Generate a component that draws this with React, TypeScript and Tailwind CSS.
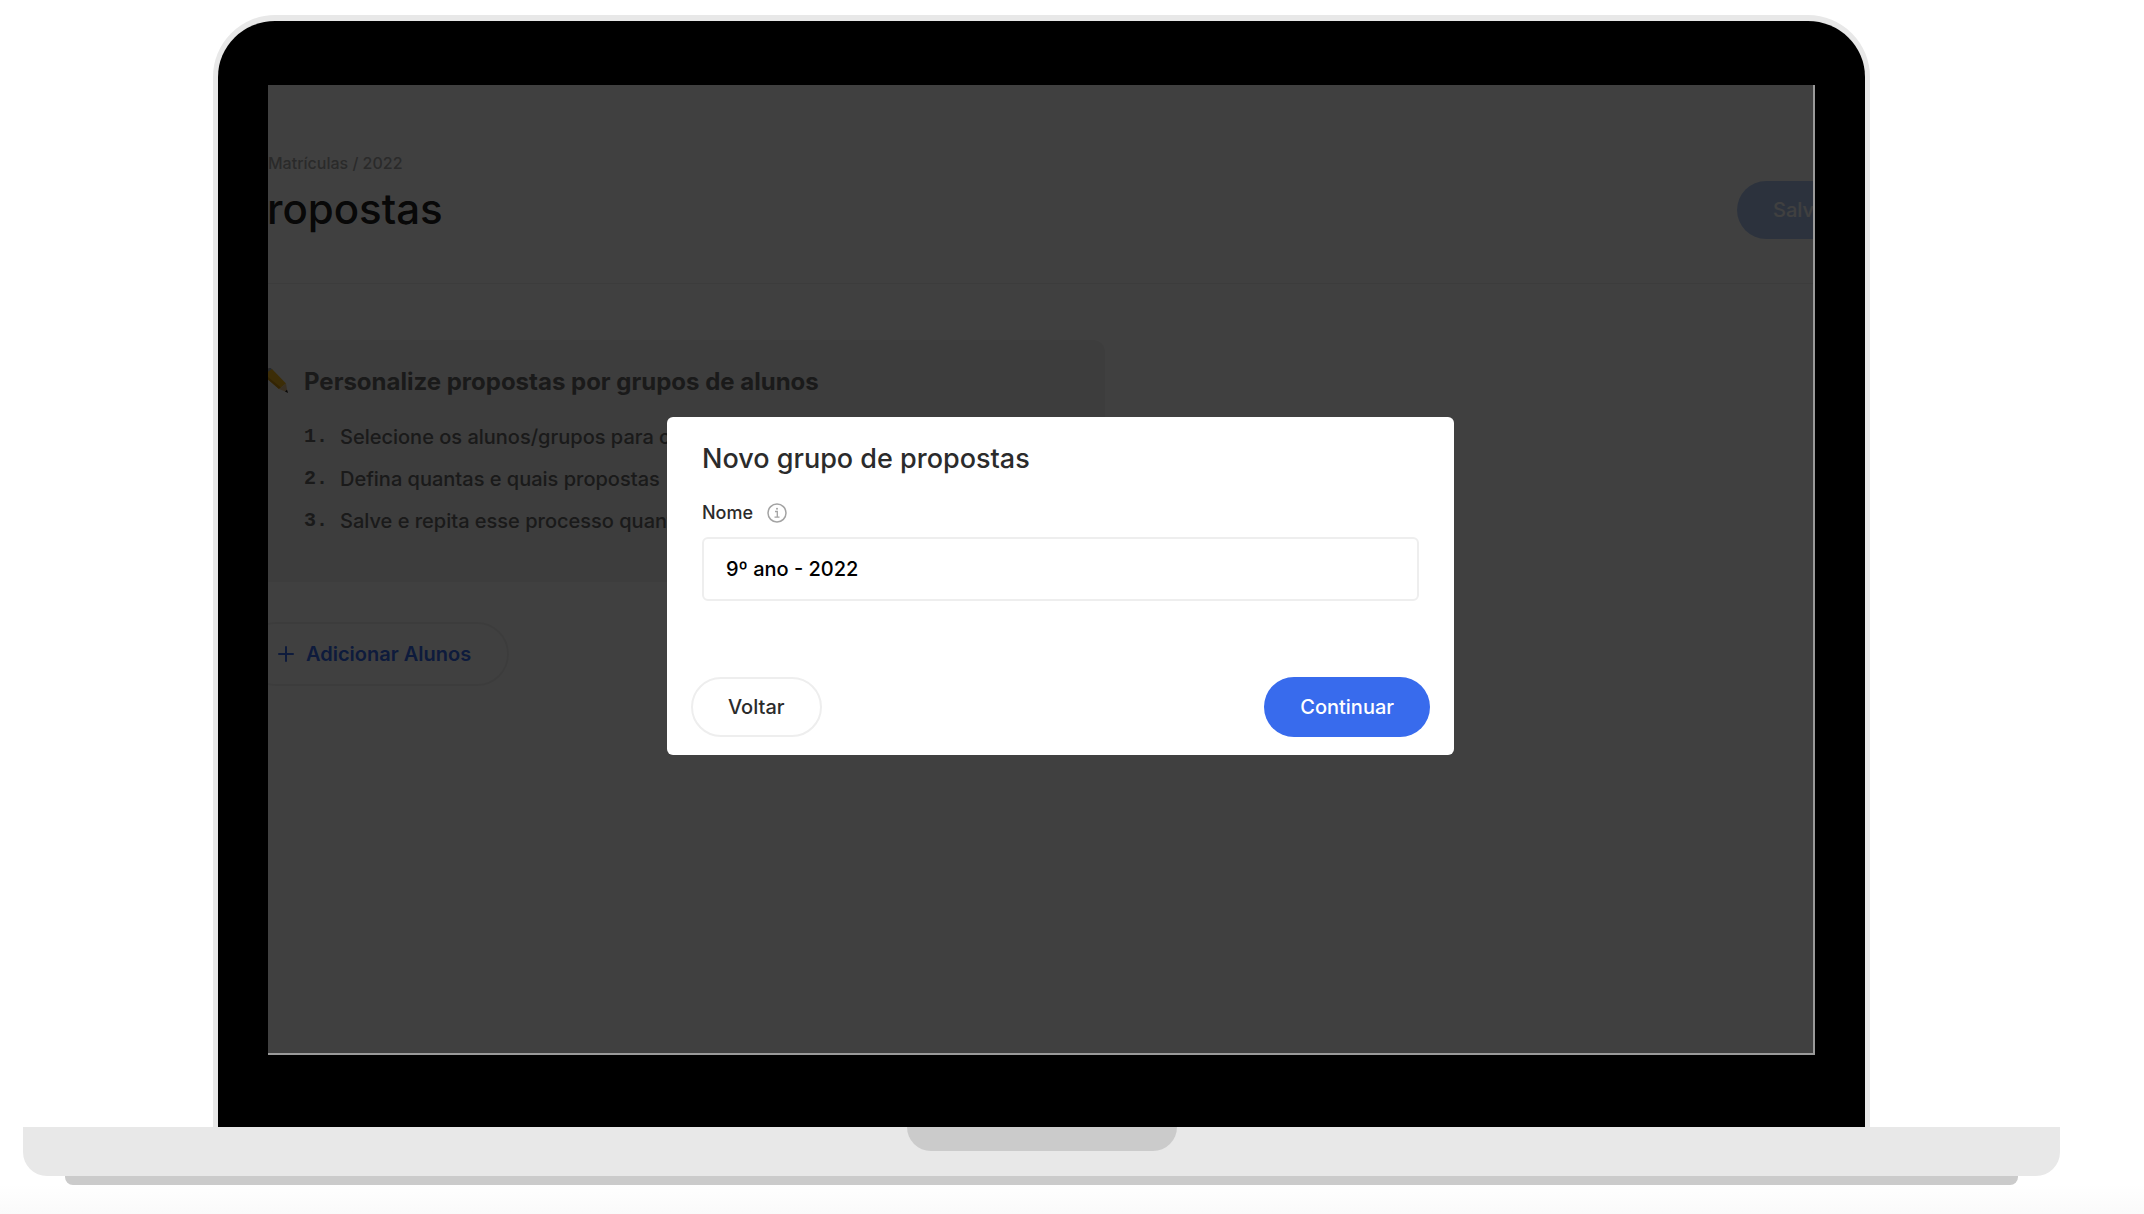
import { useState } from 'react';
import { Plus } from 'lucide-react';

const steps = [
  'Selecione os alunos/grupos para cada',
  'Defina quantas e quais propostas',
  'Salve e repita esse processo quantas',
];

function PencilIcon() {
  return (
    <svg viewBox="0 2 28 28" className="h-7 w-7 shrink-0" aria-hidden="true">
      <path d="M1 2 L5 -2 L10 1 L5 6 Z" fill="#e8788a" />
      <path d="M5 6 L10 1 L13 4.500 L7 9 Z" fill="#9aa3ad" />
      <path d="M5 8 L12 3 L26 17.500 L19 23 L5 11 Z" fill="#f0b41c" />
      <path d="M5 11 L5 8.500 L21 21.500 L19 23 Z" fill="#c98f10" />
      <path d="M19 23 L26 17.500 L27.500 26.500 Z" fill="#e3bf8c" />
      <path d="M25 25.500 L27 23.800 L28 27 Z" fill="#1f1f1f" />
    </svg>
  );
}

function InfoIcon() {
  return (
    <svg viewBox="0 0 20 20" className="h-5 w-5" fill="none" stroke="#a3a3a3" aria-hidden="true">
      <circle cx="10" cy="10" r="9" strokeWidth="1.500" />
      <path d="M8 8.500 H10.300 V14 M7.500 14.200 H12.500" strokeWidth="1.300" />
      <circle cx="10" cy="5.700" r="1" fill="#a3a3a3" stroke="none" />
    </svg>
  );
}

function ProposalsPage() {
  return (
    <div>
      <header className="flex items-end justify-between border-b border-[#f0f0f0] pt-[66px] pb-11">
        <div>
          <nav className="text-[16px] leading-6 font-medium text-[#a8a8a8]">Matrículas / 2022</nav>
          <h1 className="mt-1 -ml-7 text-[42px] leading-[60px] font-medium text-[#202020]">Propostas</h1>
        </div>
        <button type="button" className="-mr-14 h-[58px] rounded-full bg-[#b0c8f2] px-9 text-[20px] font-medium text-white">
          Salvar
        </button>
      </header>

      <main className="pt-14">
        <section className="w-full max-w-[837px] rounded-r-xl bg-[#f1f1f1] pt-6 pb-10">
          <div className="-ml-2 flex items-center gap-4">
            <PencilIcon />
            <h2 className="text-[24px] leading-9 font-bold text-[#686868]">
              Personalize propostas por grupos de alunos
            </h2>
          </div>
          <ol className="mt-4 pl-9">
            {steps.map((step, i) => (
              <li key={step} className="flex text-[20px] leading-[42px] font-medium text-[#686868]">
                <span className="w-9 font-['Liberation_Mono',monospace] font-bold">{i + 1}.</span>
                <span className="whitespace-nowrap">{step}</span>
              </li>
            ))}
          </ol>
        </section>
        <button
          type="button"
          className="mt-10 -ml-6 flex h-16 items-center gap-2 rounded-full border-2 border-[#f0f0f0] pr-9 pl-7 text-[20px] font-semibold text-[#386bed]"
        >
          <Plus className="h-6 w-6" strokeWidth={2} />
          Adicionar Alunos
        </button>
      </main>
    </div>
  );
}

function NewGroupDialog() {
  const [name, setName] = useState('9º ano - 2022');

  return (
    <div
      role="dialog"
      aria-labelledby="dialog-title"
      className="w-full max-w-[787px] rounded-md bg-white p-6 pb-[18px] text-[#2b2b2b]"
    >
      <div className="px-[11px]">
        <h2 id="dialog-title" className="text-[27px] leading-9 font-medium">
          Novo grupo de propostas
        </h2>
        <div className="mt-6 flex items-center gap-[14px]">
          <label htmlFor="group-name" className="text-[18px] leading-6 font-medium">
            Nome
          </label>
          <InfoIcon />
        </div>
        <input
          id="group-name"
          value={name}
          onChange={(e) => setName(e.target.value)}
          className="mt-3 h-16 w-full rounded-md border-2 border-[#eeeeee] px-[22px] text-[20px] font-medium text-black outline-none"
        />
      </div>
      <div className="mt-[76px] flex justify-between">
        <button type="button" className="h-[60px] rounded-full border-2 border-[#eeeeee] px-[35px] text-[20px] font-medium">
          Voltar
        </button>
        <button type="button" className="h-[60px] rounded-full bg-[#386bed] px-9 text-[20px] font-medium text-white">
          Continuar
        </button>
      </div>
    </div>
  );
}

export default function App() {
  return (
    <div className="flex min-h-screen flex-col bg-white pt-[15px] font-['Inter',sans-serif]">
      <div className="pr-[84px] pl-[23px]">
        {/* lid */}
        <div className="mx-[190px] rounded-t-[62px] border-x-[5px] border-t-[6px] border-[#e8e8e8] bg-black px-[50px] pt-16 pb-[72px]">
          <div className="relative aspect-[1546/969] overflow-hidden border-r-2 border-b-2 border-[#9a9a9a] bg-white">
            <ProposalsPage />
            <div className="absolute inset-0 flex items-center justify-center bg-black/75 pt-[34px] pl-10">
              <NewGroupDialog />
            </div>
          </div>
        </div>

        {/* base */}
        <div className="h-[49px] rounded-b-3xl bg-[#e8e8e8]">
          <div className="mx-auto h-6 w-[270px] rounded-b-3xl bg-[#cbcbcb]" />
        </div>
        <div className="mx-[42px] h-[9px] rounded-b-lg bg-[#cbcbcb]" />
      </div>
      <div className="flex-1 bg-linear-to-b from-white to-[#fafafa]" />
    </div>
  );
}
